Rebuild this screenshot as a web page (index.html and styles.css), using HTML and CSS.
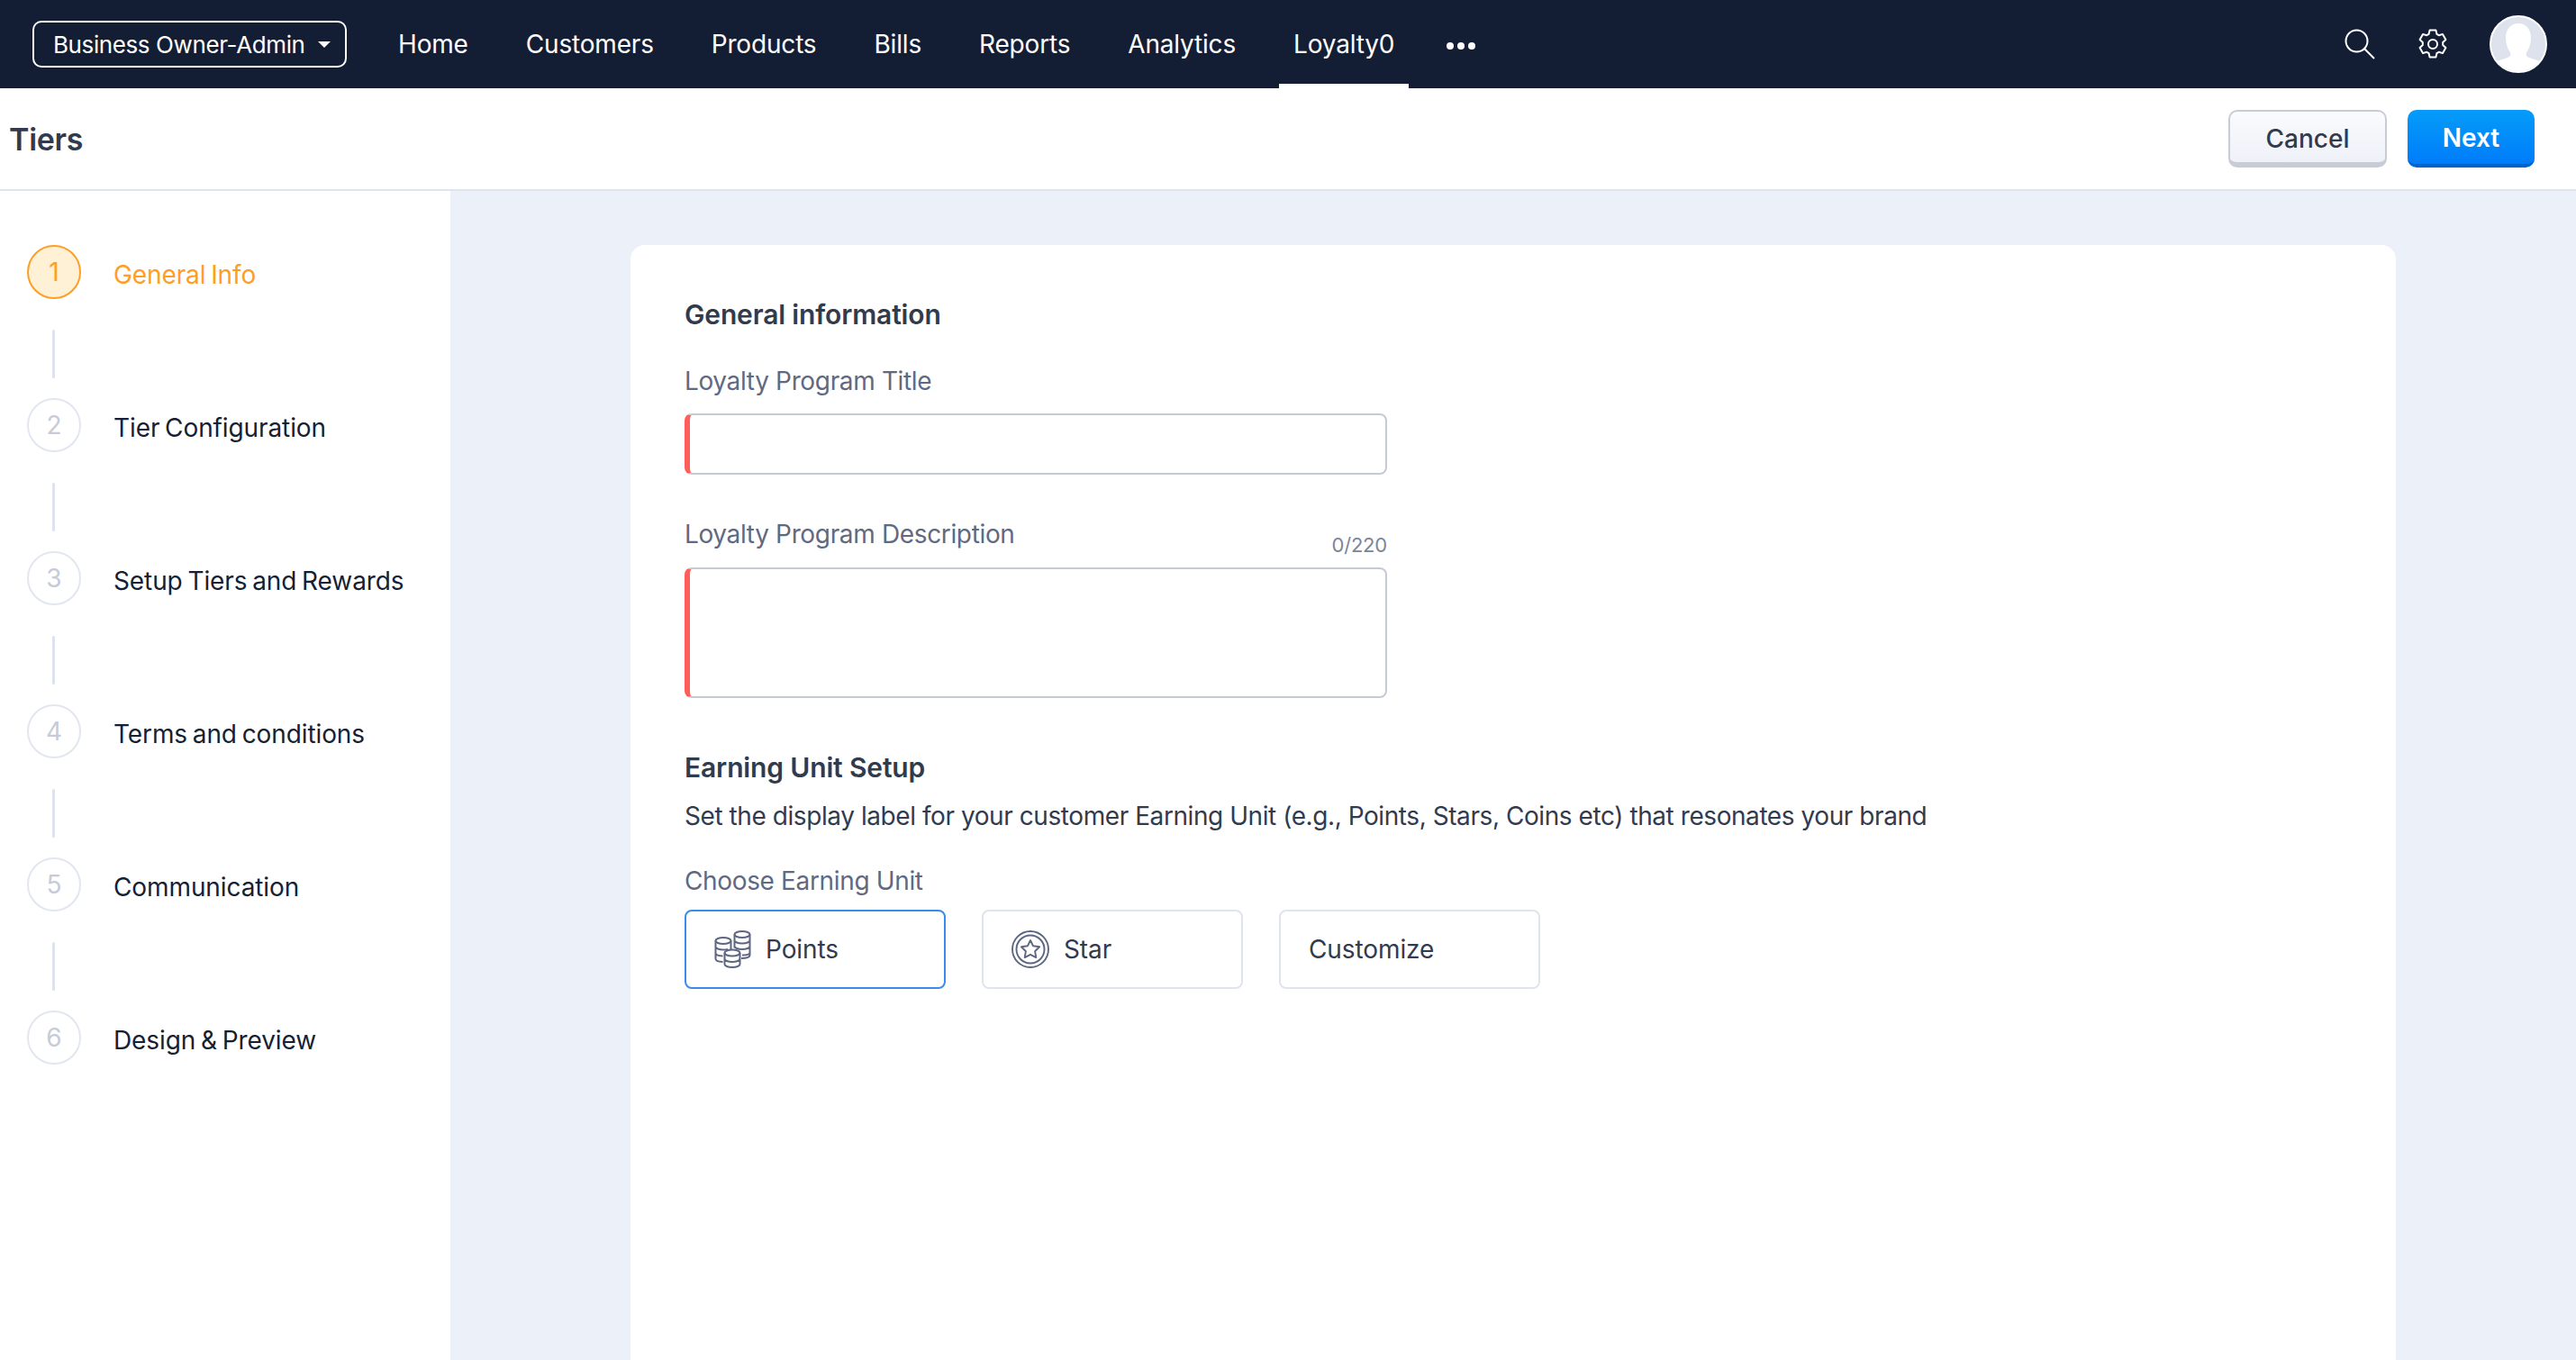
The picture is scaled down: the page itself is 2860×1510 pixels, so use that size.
FILE: index.html
```html
<!DOCTYPE html>
<html lang="en">
<head>
    <meta charset="UTF-8">
    <title>Tiers</title>
    <link rel="stylesheet" href="styles.css">
</head>
<body>
    <!-- Top navigation -->
    <div class="navbar">
        <button class="role-button">Business Owner-Admin <span class="caret"></span></button>
        <div class="nav-links">
            <a class="nav-link">Home</a>
            <a class="nav-link">Customers</a>
            <a class="nav-link">Products</a>
            <a class="nav-link">Bills</a>
            <a class="nav-link">Reports</a>
            <a class="nav-link">Analytics</a>
            <a class="nav-link active">Loyalty0</a>
            <a class="nav-link more"><i></i><i></i><i></i></a>
        </div>
        <div class="nav-icons">
            <svg class="icon-search" width="34" height="34" viewBox="0 0 34 34" fill="none" stroke="#fff" stroke-width="2">
                <circle cx="13.5" cy="13.5" r="12"/>
                <path d="M22.5 22.5L33 33"/>
            </svg>
            <svg class="icon-gear" width="32" height="34" viewBox="0 0 32 34" fill="none" stroke="#fff" stroke-width="2" stroke-linejoin="round">
                <path d="M12.6 1.5h6.8l1 4.3 2.4 1.4 4.2-1.3 3.4 6-3.2 3v3.2l3.2 3-3.4 6-4.2-1.3-2.4 1.4-1 4.3h-6.8l-1-4.3-2.4-1.4-4.2 1.3-3.4-6 3.2-3v-3.2l-3.2-3 3.4-6 4.2 1.3 2.4-1.4z"/>
                <circle cx="16" cy="17" r="5"/>
            </svg>
            <div class="avatar">
                <svg width="60" height="60" viewBox="0 0 60 60">
                    <path fill="#fff" d="M30 7c9 0 14 7 14 16 0 6-2 12-5 16-1 3 0 5 3 6l12 4c2 2 3 4 3 11H3c0-7 1-9 3-11l12-4c3-1 4-3 3-6-3-4-5-10-5-16C16 14 21 7 30 7z"/>
                </svg>
            </div>
        </div>
    </div>

    <!-- Page title and actions -->
    <div class="page-header">
        <h1>Tiers</h1>
        <div class="actions">
            <button class="btn btn-cancel">Cancel</button>
            <button class="btn btn-next">Next</button>
        </div>
    </div>

    <div class="layout">
        <!-- Wizard steps -->
        <div class="sidebar">
            <div class="step current"><span class="step-num">1</span><span class="step-name">General Info</span></div>
            <div class="step-line"></div>
            <div class="step"><span class="step-num">2</span><span class="step-name">Tier Configuration</span></div>
            <div class="step-line"></div>
            <div class="step"><span class="step-num">3</span><span class="step-name">Setup Tiers and Rewards</span></div>
            <div class="step-line"></div>
            <div class="step"><span class="step-num">4</span><span class="step-name">Terms and conditions</span></div>
            <div class="step-line"></div>
            <div class="step"><span class="step-num">5</span><span class="step-name">Communication</span></div>
            <div class="step-line"></div>
            <div class="step"><span class="step-num">6</span><span class="step-name">Design &amp; Preview</span></div>
        </div>

        <!-- Form -->
        <div class="main">
            <div class="card">
                <h2>General information</h2>
                <label class="field-label first">Loyalty Program Title</label>
                <input class="required-input" type="text">

                <div class="label-row">
                    <label class="field-label">Loyalty Program Description</label>
                    <span class="counter">0/220</span>
                </div>
                <textarea class="required-input"></textarea>

                <h2 class="second">Earning Unit Setup</h2>
                <p class="help">Set the display label for your customer Earning Unit (e.g., Points, Stars, Coins etc) that resonates your brand</p>
                <label class="field-label choose">Choose Earning Unit</label>
                <div class="units">
                    <div class="unit selected">
                        <svg width="41" height="42" viewBox="0 0 41 42" fill="none" stroke="#5d6780" stroke-width="2">
                            <ellipse cx="31" cy="4.500" rx="8.500" ry="3.500"/>
                            <path d="M22.500 4.500v15M39.500 4.500v23c0 2-3 3.400-9.500 3.500M22.500 11c0 2 3.800 3.500 8.500 3.500s8.500-1.500 8.500-3.500M22.500 17.500c0 2 3.800 3.500 8.500 3.500s8.500-1.500 8.500-3.500M31 27.500c4 0 8.500-1 8.500-3"/>
                            <ellipse cx="10" cy="11.500" rx="8.500" ry="3.500"/>
                            <path d="M1.500 11.500v20c0 2 3 3.300 8 3.500M18.500 11.500v10M1.500 18c0 2 3.800 3.500 8.500 3.500 2 0 3.500-.2 5-.6M1.500 25c0 2 3 3.300 8 3.500"/>
                            <ellipse cx="20" cy="25" rx="8.500" ry="3.500"/>
                            <path d="M11.500 25v12.500c0 2 3.800 3.500 8.500 3.500s8.500-1.500 8.500-3.500V25M11.500 31.500c0 2 3.800 3.500 8.500 3.500s8.500-1.500 8.500-3.500"/>
                        </svg>
                        <span>Points</span>
                    </div>
                    <div class="unit">
                        <svg width="42" height="42" viewBox="0 0 42 42" fill="none" stroke="#5d6780" stroke-width="1.900" stroke-linejoin="round">
                            <circle cx="21" cy="21" r="20"/>
                            <circle cx="21" cy="21" r="15.500"/>
                            <path d="M21 11l3.100 6.300 7 1-5 4.900 1.200 6.900-6.300-3.300-6.300 3.300 1.200-6.900-5-4.900 7-1z"/>
                        </svg>
                        <span>Star</span>
                    </div>
                    <div class="unit"><span>Customize</span></div>
                </div>
            </div>
        </div>
    </div>
</body>
</html>
```

FILE: styles.css
```css
/* Reset default styles */
* {
    margin: 0;
    padding: 0;
    box-sizing: border-box;
}

html, body {
    height: 100%;
}

body {
    display: flex;
    flex-direction: column;
    overflow: hidden;
    background: #fff;
    font-family: "Inter", "Liberation Sans", sans-serif;
    color: #161f33;
}

/* Navigation bar */
.navbar {
    height: 98px;
    flex: none;
    display: flex;
    align-items: center;
    padding-left: 36px;
    background: #131e35;
    color: #fff;
}

.role-button {
    width: 349px;
    height: 52px;
    display: flex;
    align-items: center;
    gap: 14px;
    padding-left: 21px;
    background: none;
    border: 2px solid #fff;
    border-radius: 10px;
    color: #fff;
    font: 400 26px "Inter", sans-serif;
    letter-spacing: -0.4px;
    white-space: nowrap;
}

.caret {
    border-left: 7px solid transparent;
    border-right: 7px solid transparent;
    border-top: 7px solid #fff;
}

.nav-links {
    height: 98px;
    display: flex;
    margin-left: 41px;
    gap: 32px;
}

.nav-link {
    display: flex;
    align-items: center;
    padding: 0 16px;
    font-size: 28px;
    letter-spacing: -0.18px;
    border-bottom: 5px solid transparent;
    border-top: 5px solid transparent;
}

.nav-link.active {
    border-bottom-color: #fff;
}

.nav-link.more {
    gap: 4px;
    padding: 0;
    margin-left: 10px;
}

.nav-link.more i {
    width: 8px;
    height: 8px;
    margin-top: 4px;
    border-radius: 50%;
    background: #fff;
}

.nav-icons {
    margin-left: auto;
    display: flex;
    align-items: center;
    padding-right: 32px;
}

.icon-gear {
    margin-left: 48px;
}

.avatar {
    width: 64px;
    height: 64px;
    margin-left: 47px;
    border: 2px solid #fff;
    border-radius: 50%;
    background: #dde2ec;
    overflow: hidden;
}

/* Page title row */
.page-header {
    height: 114px;
    flex: none;
    display: flex;
    align-items: center;
    justify-content: space-between;
    padding: 0 46px 0 10px;
    border-bottom: 2px solid #dee3ee;
}

h1 {
    font-size: 34px;
    font-weight: 600;
    color: #323b4e;
    letter-spacing: -0.3px;
}

.actions {
    display: flex;
    gap: 23px;
}

.btn {
    height: 64px;
    border-radius: 10px;
    font: 500 28px "Inter", sans-serif;
}

.btn-cancel {
    width: 176px;
    padding-top: 4px;
    color: #323b4e;
    background: linear-gradient(#fafbfd, #eef1f8);
    border: 2px solid #c8ccd7;
    border-bottom-width: 6px;
}

.btn-next {
    width: 141px;
    padding-top: 2px;
    color: #fff;
    font-weight: 600;
    background: linear-gradient(#059cf8, #007cfb);
    border: none;
    border-bottom: 4px solid #0064cc;
}

/* Wizard + form */
.layout {
    flex: 1;
    min-height: 0;
    display: flex;
}

.sidebar {
    width: 500px;
    flex: none;
    padding: 60px 0 0 30px;
}

.step {
    height: 60px;
    display: flex;
    align-items: center;
    gap: 36px;
}

.step-num {
    width: 60px;
    height: 60px;
    display: flex;
    align-items: center;
    justify-content: center;
    border: 2px solid #e2e6f0;
    border-radius: 50%;
    font-size: 28px;
    color: #c6cbd7;
}

.step-name {
    margin-top: 6px;
    font-size: 28px;
    letter-spacing: -0.1px;
    word-spacing: -2px;
    color: #161f33;
}

.step.current .step-num {
    border-color: #ff9e24;
    background: #fff1d6;
    color: #ff9e24;
}

.step.current .step-name {
    color: #ff9e24;
}

.step-line {
    width: 3px;
    height: 54px;
    margin: 34px 0 22px 28px;
    background: #dde2ef;
    border-radius: 2px;
}

.main {
    flex: 1;
    min-height: 0;
    padding: 60px 200px 0;
    background: #ecf0f8;
}

.card {
    height: 100%;
    padding: 57px 60px 0;
    background: #fff;
    border-radius: 16px 16px 0 0;
}

h2 {
    font-size: 30px;
    line-height: 40px;
    font-weight: 600;
    color: #323b4e;
    letter-spacing: -0.15px;
}

h2.second {
    margin-top: 57px;
}

.field-label {
    display: block;
    font-size: 28px;
    line-height: 36px;
    letter-spacing: -0.35px;
    color: #5f6a82;
}

.field-label.first {
    margin: 36px 0 18px;
}

.field-label.choose {
    margin: 36px 0 14px;
}

.label-row {
    width: 780px;
    display: flex;
    justify-content: space-between;
    margin: 48px 0 19px;
}

.counter {
    align-self: flex-end;
    margin-bottom: -7px;
    font-size: 22px;
    line-height: 26px;
    letter-spacing: -0.2px;
    color: #7c8598;
}

.required-input {
    display: block;
    width: 780px;
    height: 68px;
    background: #fff;
    border: 2px solid #c5cad6;
    border-left: 6px solid #ff5f5a;
    border-radius: 8px;
    outline: none;
    resize: none;
}

textarea.required-input {
    height: 145px;
}

.help {
    margin-top: 16px;
    font-size: 28px;
    line-height: 36px;
    color: #323b4e;
    letter-spacing: -0.43px;
}

.units {
    display: flex;
    gap: 40px;
}

.unit {
    width: 290px;
    height: 88px;
    display: flex;
    align-items: center;
    gap: 16px;
    padding-left: 31px;
    border: 2px solid #e0e4ee;
    border-radius: 8px;
    font-size: 28px;
    letter-spacing: -0.1px;
    color: #323b4e;
}

.unit.selected {
    border-color: #3b8bea;
}
```
